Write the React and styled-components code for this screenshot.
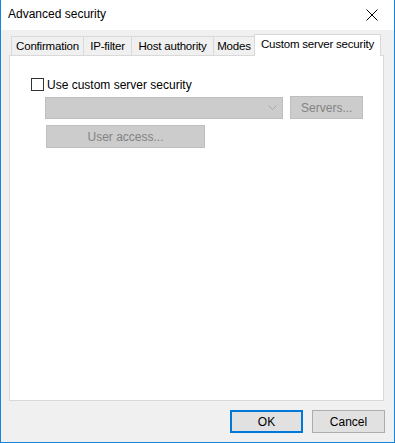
import React, {useState} from 'react'
import styled, {createGlobalStyle, css} from 'styled-components'

const GlobalStyle = createGlobalStyle`
  html, body {
    margin: 0;
    padding: 0;
    background: #ffffff;
  }
  * {
    box-sizing: border-box;
  }
`

const uiFont = css`
  font-family: 'Liberation Sans', Arial, sans-serif;
  font-size: 12px;
`

const Window = styled.div`
  ${uiFont}
  width: 395px;
  height: 443px;
  display: flex;
  flex-direction: column;
  background: #f0f0f0;
  border: 1px solid #1883d7;
  border-top: none;
  color: #000;
`

const TitleBar = styled.div`
  height: 30px;
  background: #ffffff;
  display: flex;
  align-items: center;
  justify-content: space-between;
  padding-left: 7px;
  flex: none;
`

const Title = styled.span`
  font-size: 12px;
  margin-top: -2px;
`

const CloseButton = styled.div`
  width: 46px;
  height: 30px;
  display: flex;
  align-items: center;
  justify-content: center;
  margin-right: -1px;
`

const Body = styled.div`
  flex: 1;
  display: flex;
  flex-direction: column;
  padding: 4px 10px 0 8px;
`

const TabStrip = styled.div`
  display: flex;
  align-items: flex-end;
  height: 21px;
  padding-left: 3px;
  position: relative;
  z-index: 1;
`

const Tab = styled.div`
  width: ${p => p.$w}px;
  height: 19px;
  display: flex;
  align-items: center;
  justify-content: center;
  background: #f0f0f0;
  border: 1px solid #d9d9d9;
  border-bottom: none;
  margin-left: -1px;
  white-space: nowrap;
  font-size: 11.5px;
  letter-spacing: -0.2px;
  color: #000;

  ${p => p.$active && css`
    height: 22px;
    background: #ffffff;
    margin-bottom: -1px;
    padding-bottom: 3px;
  `}
`

const Panel = styled.div`
  height: 346px;
  background: #ffffff;
  border: 1px solid #d9d9d9;
  padding: 21px 20px 0 20px;
  display: flex;
  flex-direction: column;
`

const CheckRow = styled.label`
  display: flex;
  align-items: center;
  gap: 3px;
  height: 15px;
  margin-left: 1px;
`

const CheckBox = styled.span`
  width: 13px;
  height: 13px;
  border: 1px solid #333333;
  background: #ffffff;
  flex: none;
`

const Options = styled.div`
  display: flex;
  flex-direction: column;
  gap: 6px;
  padding-left: 15px;
  margin-top: 4px;
`

const Line = styled.div`
  display: flex;
  align-items: center;
  gap: 7px;
`

const Combo = styled.div`
  width: 240px;
  height: 22px;
  background: #cccccc;
  border: 1px solid #bfbfbf;
  display: flex;
  align-items: center;
  justify-content: flex-end;
  padding-right: 5px;
`

const DisabledButton = styled.div`
  width: ${p => p.$w}px;
  height: 23px;
  background: #cccccc;
  border: 1px solid #bfbfbf;
  color: #838383;
  display: flex;
  align-items: center;
  justify-content: center;
  margin-left: ${p => p.$ml || 0}px;
`

const Footer = styled.div`
  flex: 1;
  display: flex;
  justify-content: flex-end;
  align-items: flex-start;
  gap: 9px;
  padding: 9px 0 0 0;
  margin-right: -1px;
`

const Button = styled.div`
  width: 73px;
  height: 23px;
  background: #e1e1e1;
  border: 1px solid #adadad;
  display: flex;
  align-items: center;
  justify-content: center;
  color: #000;

  ${p => p.$default && css`
    border: 2px solid #0078d7;
  `}
`

const tabs = [
  {label: 'Confirmation', w: 73},
  {label: 'IP-filter', w: 49},
  {label: 'Host authority', w: 83},
  {label: 'Modes', w: 42},
  {label: 'Custom server security', w: 127},
]

export default function App() {
  const [active, setActive] = useState(4)

  return (
    <>
      <GlobalStyle />
      <Window>
        <TitleBar>
          <Title>Advanced security</Title>
          <CloseButton>
            <svg width="12" height="12" viewBox="0 0 12 12">
              <path d="M0.5 0.5 L11.5 11.5 M11.5 0.5 L0.5 11.5" stroke="#000" strokeWidth="1" fill="none" />
            </svg>
          </CloseButton>
        </TitleBar>
        <Body>
          <TabStrip>
            {tabs.map((t, i) => (
              <Tab key={i} $w={t.w} $active={i === active} onClick={() => setActive(i)}>
                {t.label}
              </Tab>
            ))}
          </TabStrip>
          <Panel>
            <CheckRow>
              <CheckBox />
              <span>Use custom server security</span>
            </CheckRow>
            <Options>
              <Line>
                <Combo>
                  <svg width="9" height="6" viewBox="0 0 9 6">
                    <path d="M0.5 0.5 L4.5 4.5 L8.5 0.5" stroke="#a8a8a8" strokeWidth="1" fill="none" />
                  </svg>
                </Combo>
                <DisabledButton $w={73}>Servers...</DisabledButton>
              </Line>
              <DisabledButton $w={159} $ml={1}>User access...</DisabledButton>
            </Options>
          </Panel>
          <Footer>
            <Button $default>OK</Button>
            <Button>Cancel</Button>
          </Footer>
        </Body>
      </Window>
    </>
  )
}
